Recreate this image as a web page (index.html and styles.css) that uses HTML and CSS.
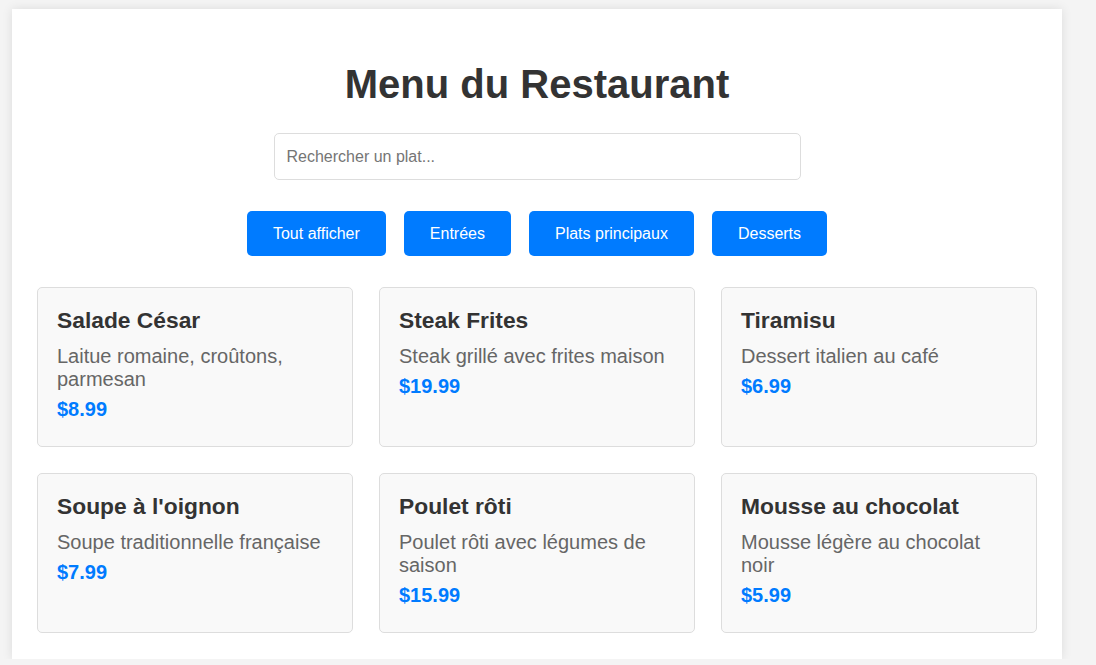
FILE: index.html
```html
<!DOCTYPE html>
<html lang="fr">
<head>
<meta charset="utf-8">
<title>Menu du Restaurant</title>
<link rel="stylesheet" href="styles.css">
</head>
<body>
<div class="container">
  <h1 class="title">Menu du Restaurant</h1>
  <div class="search-row">
    <input class="search" type="text" placeholder="Rechercher un plat...">
  </div>
  <div class="filters">
    <button class="filter">Tout afficher</button>
    <button class="filter">Entrées</button>
    <button class="filter">Plats principaux</button>
    <button class="filter">Desserts</button>
  </div>
  <div class="grid">
    <div class="card">
      <h3 class="card-title">Salade César</h3>
      <p class="card-desc">Laitue romaine, croûtons, parmesan</p>
      <p class="card-price">$8.99</p>
    </div>
    <div class="card">
      <h3 class="card-title">Steak Frites</h3>
      <p class="card-desc">Steak grillé avec frites maison</p>
      <p class="card-price">$19.99</p>
    </div>
    <div class="card">
      <h3 class="card-title">Tiramisu</h3>
      <p class="card-desc">Dessert italien au café</p>
      <p class="card-price">$6.99</p>
    </div>
    <div class="card">
      <h3 class="card-title">Soupe à l'oignon</h3>
      <p class="card-desc">Soupe traditionnelle française</p>
      <p class="card-price">$7.99</p>
    </div>
    <div class="card">
      <h3 class="card-title">Poulet rôti</h3>
      <p class="card-desc">Poulet rôti avec légumes de saison</p>
      <p class="card-price">$15.99</p>
    </div>
    <div class="card">
      <h3 class="card-title">Mousse au chocolat</h3>
      <p class="card-desc">Mousse légère au chocolat noir</p>
      <p class="card-price">$5.99</p>
    </div>
  </div>
</div>
</body>
</html>
```
FILE: styles.css
```css
html, body {
  margin: 0;
  padding: 0;
}
body {
  background: #f4f4f4;
  font-family: "Liberation Sans", Arial, sans-serif;
  color: #333;
}
.container {
  box-sizing: border-box;
  width: 1050px;
  margin: 9px 0 0 12px;
  padding: 25px 25px 26px;
  background: #fff;
  box-shadow: 0 0 10px rgba(0, 0, 0, 0.1);
}
.title {
  margin: 27px 0 26px;
  font-size: 40px;
  line-height: 46px;
  font-weight: bold;
  text-align: center;
  color: #333;
}
.search-row {
  display: flex;
  justify-content: center;
  margin-bottom: 31px;
}
.search {
  box-sizing: border-box;
  width: 527px;
  height: 47px;
  padding: 0 12px;
  border: 1px solid #ddd;
  border-radius: 5px;
  font-family: "Liberation Sans", Arial, sans-serif;
  font-size: 16px;
  color: #333;
  outline: none;
}
.search::placeholder {
  color: #757575;
}
.filters {
  display: flex;
  justify-content: center;
  gap: 18px;
  margin-bottom: 31px;
}
.filter {
  height: 45px;
  padding: 0 26px;
  border: none;
  border-radius: 5px;
  background: #007bff;
  color: #fff;
  font-family: "Liberation Sans", Arial, sans-serif;
  font-size: 16px;
  cursor: pointer;
}
.grid {
  display: grid;
  grid-template-columns: repeat(3, 1fr);
  column-gap: 26px;
  row-gap: 26px;
}
.card {
  box-sizing: border-box;
  height: 160px;
  padding: 20px 20px 20px 19px;
  border: 1px solid #ddd;
  border-radius: 5px;
  background: #f9f9f9;
}
.card-title {
  margin: 0 0 13px;
  font-size: 22.8px;
  line-height: 24px;
  font-weight: bold;
  color: #333;
}
.card-desc {
  margin: 0 0 7px;
  font-size: 20px;
  line-height: 23px;
  color: #666;
}
.card-price {
  margin: 0;
  font-size: 20px;
  line-height: 23px;
  font-weight: bold;
  color: #007bff;
}
```
